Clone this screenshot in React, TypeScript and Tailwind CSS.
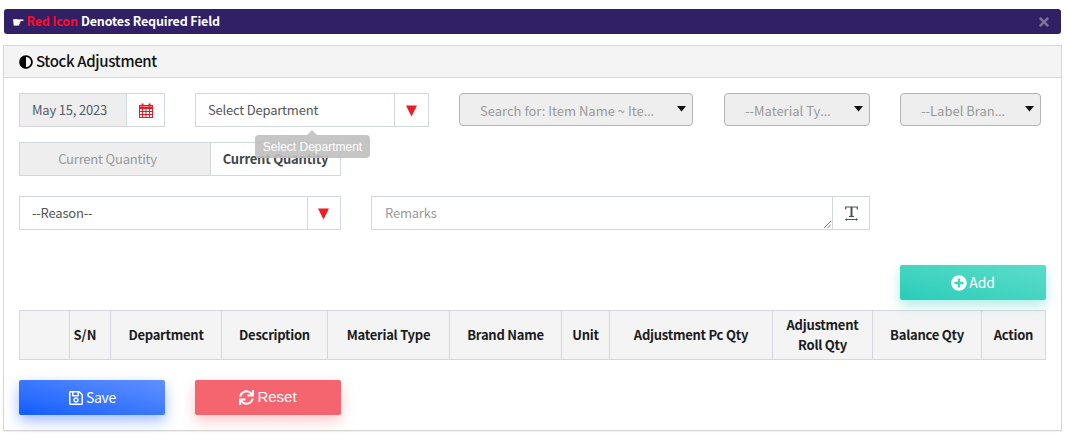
import { FaAdjust, FaPlusCircle, FaRegSave, FaSync, FaTimes } from "react-icons/fa";

const font = { fontFamily: '"Noto Sans CJK SC", "Noto Sans", sans-serif' };

function RedCaret() {
  return (
    <svg width="11" height="12" viewBox="0 0 11 12" className="mr-[1px] mt-[2px]">
      <path d="M0 .5h11L5.5 11.5z" fill="#ee1c25" />
    </svg>
  );
}

function Calendar() {
  return (
    <svg width="14" height="15" viewBox="0 0 14 15" fill="none" stroke="#f2141e">
      <rect x="0.5" y="2.5" width="13" height="12" />
      <path d="M0 3.5h14V6H0z" fill="#f2141e" stroke="none" />
      <path d="M0.5 8.5h13M0.5 11.5h13M3.5 6v8M7 6v8M10.5 6v8" />
      <path d="M3.5 0.5v3M10.5 0.5v3" strokeWidth="2" />
    </svg>
  );
}

function TextWidth() {
  return (
    <svg width="13" height="15" viewBox="0 0 13 15" fill="none" stroke="#4b5258">
      <path d="M0.7 3.5V1h11.6v2.5" strokeWidth="1.2" />
      <path d="M6.5 1v9" strokeWidth="2" />
      <path d="M4 10.5h5" strokeWidth="1.2" />
      <path d="M1 13.5h11" strokeWidth="1" />
      <path d="M2 12v3L0 13.5zM11 12v3l2-1.5z" fill="#4b5258" stroke="none" />
    </svg>
  );
}

function PickerButton({ label, width }: { label: string; width: string }) {
  return (
    <div className={`${width} flex h-[33px] items-center rounded-[4px] border border-[#b4b4b4] bg-[#eeeeee] pr-[6px] text-[13px] text-[#999999]`}>
      <span className="flex-1 whitespace-nowrap pl-[20px] pt-[3px]">
        {label}
        <span style={{ fontFamily: '"Noto Sans", sans-serif' }}>…</span>
      </span>
      <svg width="9" height="6" viewBox="0 0 9 6" className="-mt-[2px] shrink-0">
        <path d="M0 0h9L4.5 5.5z" fill="#111111" />
      </svg>
    </div>
  );
}

const columns = [
  { label: "", w: "w-[50px] px-[8px]" },
  { label: "S/N", w: "w-[41px] pl-[3px] pr-[13px] tracking-[0.1px]" },
  { label: "Department", w: "w-[111px] px-[8px]" },
  { label: "Description", w: "w-[106px] px-[8px]" },
  { label: "Material Type", w: "w-[122px] px-[8px]" },
  { label: "Brand Name", w: "w-[112px] px-[8px]" },
  { label: "Unit", w: "w-[48px] px-[8px]" },
  { label: "Adjustment Pc Qty", w: "w-[163px] px-[8px]" },
  { label: "Adjustment Roll Qty", w: "w-[100px] px-[8px]" },
  { label: "Balance Qty", w: "w-[109px] px-[8px]" },
  { label: "Action", w: "w-[63px] px-[8px]" },
];

export default function App() {
  return (
    <div style={font} className="h-[442px] w-[1068px] overflow-hidden bg-white pt-[9px]">
      <div className="mx-[4px] flex h-[25px] w-[1057px] items-center rounded-[3px] bg-[#312065] pl-[8px] pr-[10px] text-[12.5px] font-semibold tracking-[-0.15px] text-white">
        <span className="mr-[2px] text-[14px] leading-none" style={{ fontFamily: '"DejaVu Sans", sans-serif' }}>☛</span>
        <span className="-mt-[1px] text-[#ff0a2c]">Red Icon</span>
        <span className="-mt-[1px] ml-[3px] flex-1">Denotes Required Field</span>
        <FaTimes className="text-[14px] text-[#7d7399]" />
      </div>

      <div className="mx-[3px] mt-[11px] h-[386px] w-[1059px] border border-[#d6d6d6] [box-shadow:0_1px_1px_rgba(0,0,0,0.05)]">
        <div className="flex h-[32px] items-center gap-[3px] border-b border-[#d6d8dc] bg-[#f4f4f4] pl-[15px] text-[15px] font-medium leading-none tracking-[-0.35px] text-[#111111]">
          <FaAdjust className="text-[14px] text-black" />
          <span className="mb-[2px]">Stock Adjustment</span>
        </div>

        <div className="relative pl-[15px] pt-[15px]">
          <div className="flex items-start">
            <div className="flex h-[34px] w-[146px] border border-[#d2d6de] text-[13px] tracking-[-0.2px] text-[#555b66]">
              <div className="flex w-[107px] items-center border-r border-[#d2d6de] bg-[#eeeeee] pl-[12px]">May 15, 2023</div>
              <div className="flex flex-1 items-center justify-center"><Calendar /></div>
            </div>
            <div className="ml-[30px] flex h-[34px] w-[234px] border border-[#d2d6de] text-[13px] tracking-[-0.2px] text-[#555555]">
              <div className="flex flex-1 items-center border-r border-[#d2d6de] pl-[12px]">Select Department</div>
              <div className="flex w-[33px] items-center justify-center"><RedCaret /></div>
            </div>
            <div className="ml-[30px]"><PickerButton width="w-[234px]" label="Search for: Item Name ~ Ite" /></div>
            <div className="ml-[31px]"><PickerButton width="w-[146px]" label="--Material Ty" /></div>
            <div className="ml-[30px]"><PickerButton width="w-[141px]" label="--Label Bran" /></div>
          </div>

          <div className="mt-[15px] flex h-[34px] w-[322px] border border-[#d2d6de] text-[13px] tracking-[-0.2px]">
            <div className="flex w-[191px] items-center justify-center border-r border-[#d2d6de] bg-[#eeeeee] pr-[15px] text-[#999999]">Current Quantity</div>
            <div className="flex flex-1 items-center justify-center font-bold text-[#444444]">Current Quantity</div>
          </div>

          <div className="mt-[20px] flex items-start">
            <div className="flex h-[34px] w-[322px] border border-[#d2d6de] text-[13px] tracking-[-0.2px] text-[#555555]">
              <div className="flex flex-1 items-center border-r border-[#d2d6de] pl-[12px]">--Reason--</div>
              <div className="flex w-[32px] items-center justify-center"><RedCaret /></div>
            </div>
            <div className="ml-[30px] flex h-[34px] w-[499px] border border-[#d2d6de] text-[13px] tracking-[-0.2px]">
              <div className="relative flex flex-1 items-center border-r border-[#d2d6de] pl-[13px] text-[#999999]">
                Remarks
                <svg width="7" height="7" viewBox="0 0 7 7" className="absolute bottom-[1px] right-[1px]" stroke="#555555" fill="none">
                  <path d="M0 7L7 0M3.5 7L7 3.5" strokeWidth="0.8" />
                </svg>
              </div>
              <div className="flex w-[36px] items-center justify-center"><TextWidth /></div>
            </div>
          </div>

          <div className="mt-[35px] flex justify-end pr-[15px]">
            <div className="flex h-[35px] w-[146px] items-center justify-center gap-[2px] rounded-[2px] bg-gradient-to-tr from-[#26cdb9] to-[#5bdcca] text-[14px] tracking-[-0.2px] text-white shadow-[0_6px_12px_rgba(38,205,185,0.35)]">
              <FaPlusCircle className="text-[16px]" />
              <span>Add</span>
            </div>
          </div>

          <div className="mt-[10px] flex h-[50px] w-[1027px] border border-[#d6d7e0] bg-[#f4f4f5] text-[13px] font-bold leading-[20px] tracking-[-0.25px] text-[#1b1b22]">
            {columns.map((c, i) => (
              <div key={i} className={`${c.w} flex shrink-0 items-center justify-center text-center ${i < columns.length - 1 ? "border-r border-[#d6d7e0]" : ""}`}>
                {c.label}
              </div>
            ))}
          </div>

          <div className="mt-[20px] flex items-start text-white">
            <div className="flex h-[35px] w-[146px] items-center justify-center gap-[2px] rounded-[2px] bg-gradient-to-tr from-[#0b5cff] to-[#6090ff] text-[14px] tracking-[-0.3px] shadow-[0_6px_14px_rgba(20,90,255,0.4)]">
              <FaRegSave className="text-[16px]" />
              <span>Save</span>
            </div>
            <div className="ml-[30px] flex h-[35px] w-[146px] items-center justify-center gap-[3px] rounded-[2px] bg-[#f4656f] text-[15px] shadow-[0_6px_14px_rgba(244,101,111,0.35)]" style={{ fontFamily: '"Liberation Sans", sans-serif' }}>
              <FaSync className="text-[15px]" />
              <span>Reset</span>
            </div>
          </div>

          <div className="absolute left-[251px] top-[57px] flex h-[23px] w-[115px] items-center justify-center rounded-[4px] bg-[#bfbfbf]/90 text-[12px] text-white" style={{ fontFamily: '"Liberation Sans", sans-serif' }}>
            Select Department
            <div className="absolute -top-[5px] left-[52px] h-0 w-0 border-x-[5px] border-b-[5px] border-x-transparent border-b-[#c8c8c8]" />
          </div>
        </div>
      </div>
    </div>
  );
}
